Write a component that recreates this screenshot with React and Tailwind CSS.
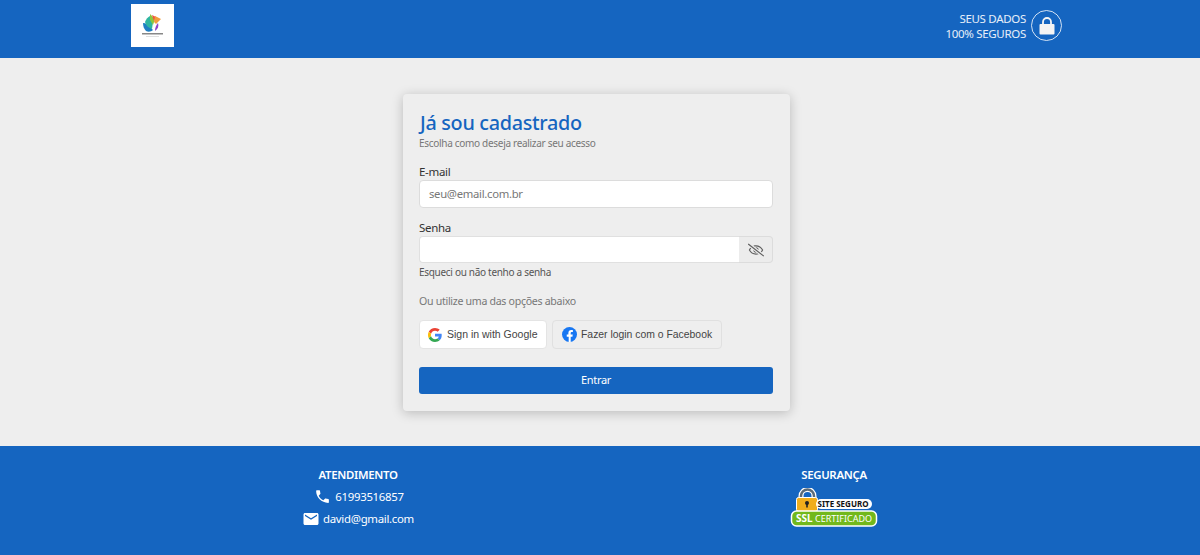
import { FaRegEyeSlash } from 'react-icons/fa';

const GoogleIcon = () => (
  <svg width="14" height="14" viewBox="0 0 48 48" className="shrink-0">
    <path fill="#EA4335" d="M24 9.500c3.500 0 6.700 1.200 9.200 3.600l6.900-6.900C35.900 2.400 30.500 0 24 0 14.600 0 6.500 5.400 2.600 13.200l8 6.200C12.500 13.700 17.800 9.500 24 9.500z" />
    <path fill="#4285F4" d="M47 24.500c0-1.600-.1-3.100-.4-4.500H24v9h12.900c-.6 3-2.200 5.500-4.700 7.200l7.700 6C44.400 37.900 47 31.800 47 24.500z" />
    <path fill="#FBBC05" d="M10.600 28.600c-.5-1.400-.8-3-.8-4.600s.3-3.200.8-4.600l-8-6.200C.9 16.500 0 20.100 0 24s.9 7.500 2.600 10.800l8-6.200z" />
    <path fill="#34A853" d="M24 48c6.500 0 11.900-2.100 15.900-5.800l-7.700-6c-2.200 1.400-5 2.300-8.200 2.300-6.200 0-11.500-4.200-13.400-9.900l-8 6.200C6.500 42.600 14.600 48 24 48z" />
  </svg>
);

const FacebookIcon = () => (
  <svg width="15" height="15" viewBox="0 0 24 24" className="shrink-0">
    <circle cx="12" cy="12" r="12" fill="#1877F2" />
    <path fill="#fff" d="M16.700 15.500l.5-3.500h-3.300V9.800c0-1 .5-1.900 2-1.900h1.500V5c0 0-1.400-.2-2.700-.2-2.700 0-4.500 1.700-4.500 4.600V12H7.600v3.500h3.100V24h3.200v-8.500h2.800z" />
  </svg>
);

const Logo = () => (
  <div className="w-[43px] h-[43px] bg-white">
    <svg width="43" height="43" viewBox="0 0 43 43">
      <path fill="#1f7fc4" d="M12 19c3 0 5 2 7 4l3 3c-2 2-5 2-7 1-2-2-3-5-3-8z" />
      <path fill="#2fb6a0" d="M14 18c1-3 3-5 5-6l3 6-1 7c-3-1-6-3-7-7z" />
      <path fill="#8cc63f" d="M19 10l5 5-2 6-3-5z" />
      <path fill="#f0513f" d="M21 11l4 2-2 4z" />
      <path fill="#f39c3d" d="M24 12l6 3-5 5-2-2z" />
      <path fill="#8e44c9" d="M27 19c1 3 0 6-3 8 0-3 1-6 3-8z" />
      <rect x="11" y="29" width="21" height="1.500" fill="#888" />
      <rect x="15" y="32" width="13" height="0.600" fill="#ccc" />
    </svg>
  </div>
);

const SslBadge = () => (
  <svg width="88" height="40" viewBox="0 0 88 40">
    <path d="M11 14V8a6.500 6.500 0 0 1 13 0v6" fill="none" stroke="#fff" strokeWidth="5" />
    <path d="M11 14V8a6.500 6.500 0 0 1 13 0v6" fill="none" stroke="#5b6b78" strokeWidth="2.500" />
    <rect x="6.500" y="9.500" width="21" height="14" rx="2" fill="#f0ad1c" stroke="#fff" strokeWidth="1" />
    <circle cx="17" cy="15" r="2" fill="#222" />
    <rect x="16.200" y="15" width="1.600" height="4.500" fill="#222" />
    <rect x="26" y="11" width="56" height="10" rx="5" fill="#fff" />
    <text x="27.500" y="19.200" fontFamily="Noto Sans, sans-serif" fontSize="8" fontWeight="700" fill="#111" letterSpacing="0">SITE SEGURO</text>
    <rect x="1.500" y="23" width="85" height="15" rx="5" fill="#72b81c" stroke="#fff" strokeWidth="1.500" />
    <text x="6" y="34" fontFamily="Noto Sans, sans-serif" fontSize="10" fontWeight="700" fill="#fff" letterSpacing="0">SSL</text>
    <text x="25" y="34" fontFamily="Noto Sans, sans-serif" fontSize="9" fill="#fff" letterSpacing="0">CERTIFICADO</text>
  </svg>
);

export default function App() {
  return (
    <div className="min-h-[555px] flex flex-col bg-[#eeeeee] text-[#333] font-['Noto_Sans',sans-serif] tracking-[-0.3px] overflow-hidden">
      <div className="bg-[#1565c0] h-[58px]">
        <div className="w-[952px] ml-[120px] h-full flex items-start justify-between pl-[11px] pr-[10px] pt-1">
          <Logo />
          <div className="flex items-center gap-[5px] mt-[6px]">
            <div className="text-right text-white/90 text-[11.500px] leading-[15px]">
              <div>SEUS DADOS</div>
              <div>100% SEGUROS</div>
            </div>
            <div className="w-[31px] h-[31px] rounded-full border border-white/80 flex items-center justify-center">
              <svg width="16" height="18" viewBox="0 0 16 18">
                <path d="M4 8V5a4 4 0 0 1 8 0v3" fill="none" stroke="#f4f4f4" strokeWidth="1.800" />
                <rect x="0.500" y="7" width="15" height="10.500" rx="1" fill="#f4f4f4" />
              </svg>
            </div>
          </div>
        </div>
      </div>

      <div className="h-[388px] pl-[403px] pt-[36px]">
        <div className="w-[387px] h-[317px] bg-[#eeeeee] rounded shadow-[0_2px_12px_rgba(0,0,0,0.22)] pl-[16px] pr-[17px] pt-[16px]">
          <h1 className="text-[#1565c0] text-[19.800px] leading-[26px] font-medium pl-[1px]">Já sou cadastrado</h1>
          <p className="text-[#777] text-[10px] leading-[13px] mt-[1px]">Escolha como deseja realizar seu acesso</p>

          <label className="block text-[11.500px] leading-[15px] mt-[14px] text-[#333]">E-mail</label>
          <div className="mt-[1px] h-[28px] bg-white border border-[#dcdcdc] rounded flex items-center px-[9px] text-[11.300px] text-[#777]">
            seu@email.com.br
          </div>

          <label className="block text-[11.500px] leading-[15px] mt-[12px] text-[#333]">Senha</label>
          <div className="mt-[1px] h-[27px] flex">
            <div className="flex-1 bg-white border border-[#e0e0e0] border-r-0 rounded-l" />
            <div className="w-[34px] bg-[#ececec] border border-[#dcdcdc] border-l-0 rounded-r flex items-center justify-center">
              <FaRegEyeSlash size={16} color="#5f5f5f" />
            </div>
          </div>
          <p className="text-[#555] text-[10px] leading-[13px] mt-[3px]">Esqueci ou não tenho a senha</p>

          <p className="text-[#777] text-[10.600px] leading-[14px] mt-[15px]">Ou utilize uma das opções abaixo</p>

          <div className="flex gap-[5px] mt-[12px] font-['Liberation_Sans',sans-serif] tracking-normal">
            <div className="w-[128px] h-[29px] bg-white border border-[#e4e4e4] rounded flex items-center gap-[5px] pl-[8px] text-[10.500px] text-[#444]">
              <GoogleIcon />
              <span>Sign in with Google</span>
            </div>
            <div className="w-[170px] h-[29px] border border-[#e0e0e0] rounded flex items-center gap-[4px] pl-[9px] text-[10.400px] text-[#444]">
              <FacebookIcon />
              <span>Fazer login com o Facebook</span>
            </div>
          </div>

          <button className="block w-full h-[27px] mt-[18px] bg-[#1565c0] text-white text-[11px] rounded-[3px]">Entrar</button>
        </div>
      </div>

      <div className="bg-[#1565c0] h-[109px] text-white">
        <div className="w-[952px] ml-[120px] grid grid-cols-2 pt-[21px]">
          <div className="flex flex-col items-center">
            <div className="text-[11.400px] leading-[16px] font-semibold">ATENDIMENTO</div>
            <div className="flex items-center gap-[4px] mt-[5px] pl-[2px] text-[11.400px] leading-[16px]">
              <svg width="17" height="17" viewBox="0 0 24 24" fill="#fff">
                <path d="M6.620 10.790c1.440 2.830 3.760 5.140 6.590 6.590l2.200-2.200c.27-.27.670-.36 1.020-.24 1.120.37 2.330.57 3.570.57.550 0 1 .45 1 1V20c0 .55-.45 1-1 1-9.390 0-17-7.610-17-17 0-.55.45-1 1-1h3.500c.55 0 1 .45 1 1 0 1.250.2 2.450.57 3.570.11.350.03.740-.25 1.020l-2.200 2.200z" />
              </svg>
              <span>61993516857</span>
            </div>
            <div className="flex items-center gap-[3px] mt-[5px] text-[11.400px] leading-[16px]">
              <svg width="18" height="18" viewBox="0 0 24 24" fill="#fff">
                <path d="M20 4H4c-1.100 0-1.990.9-1.990 2L2 18c0 1.100.9 2 2 2h16c1.100 0 2-.9 2-2V6c0-1.100-.9-2-2-2zm0 4l-8 5-8-5V6l8 5 8-5v2z" />
              </svg>
              <span>david@gmail.com</span>
            </div>
          </div>
          <div className="flex flex-col items-center">
            <div className="text-[11.400px] leading-[16px] font-semibold">SEGURANÇA</div>
            <div className="mt-[5px]">
              <SslBadge />
            </div>
          </div>
        </div>
      </div>
    </div>
  );
}
